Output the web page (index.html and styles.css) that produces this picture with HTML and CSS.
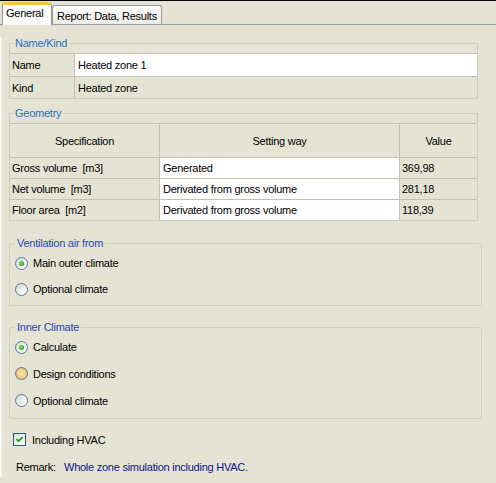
FILE: index.html
```html
<!DOCTYPE html>
<html>
<head>
<meta charset="utf-8">
<link rel="stylesheet" href="styles.css">
</head>
<body>
<div class="topline"></div>
<div class="tabstrip">
  <div class="tab active">General</div>
  <div class="tab inactive">Report: Data, Results</div>
</div>
<div class="page">
  <fieldset class="grp">
    <legend>Name/Kind</legend>
    <div class="rows">
      <div class="nk-row"><div class="lbl">Name</div><div class="val white">Heated zone 1</div></div>
      <div class="nk-row"><div class="lbl">Kind</div><div class="val">Heated zone</div></div>
    </div>
  </fieldset>

  <fieldset class="grp geo">
    <legend>Geometry</legend>
    <div class="rows">
      <div class="geo-row head"><div class="c1">Specification</div><div class="c2">Setting way</div><div class="c3">Value</div></div>
      <div class="geo-row"><div class="c1">Gross volume&nbsp; [m3]</div><div class="c2 white">Generated</div><div class="c3">369,98</div></div>
      <div class="geo-row"><div class="c1">Net volume&nbsp; [m3]</div><div class="c2 white">Derivated from gross volume</div><div class="c3">281,18</div></div>
      <div class="geo-row"><div class="c1">Floor area&nbsp; [m2]</div><div class="c2 white">Derivated from gross volume</div><div class="c3">118,39</div></div>
    </div>
  </fieldset>

  <fieldset class="xp vent">
    <legend>Ventilation air from</legend>
    <div class="opt"><span class="radio checked"></span><span>Main outer climate</span></div>
    <div class="opt"><span class="radio"></span><span>Optional climate</span></div>
  </fieldset>

  <fieldset class="xp inner">
    <legend>Inner Climate</legend>
    <div class="opt"><span class="radio checked"></span><span>Calculate</span></div>
    <div class="opt"><span class="radio hover"></span><span>Design conditions</span></div>
    <div class="opt"><span class="radio"></span><span>Optional climate</span></div>
  </fieldset>

  <div class="check-row">
    <span class="checkbox"><svg width="11" height="11" viewBox="0 0 11 11"><path d="M2.5 5.2 L4.5 7.2 L8.5 3.2" fill="none" stroke="#21a121" stroke-width="1.8"/></svg></span>
    <span>Including HVAC</span>
  </div>

  <div class="remark">
    <span class="remark-lbl">Remark:</span>
    <span class="remark-val">Whole zone simulation including HVAC.</span>
  </div>
</div>
</body>
</html>
```

FILE: styles.css
```css
* { box-sizing: border-box; }

html, body {
  margin: 0;
  padding: 0;
}

body {
  width: 496px;
  height: 483px;
  overflow: hidden;
  background: #e5e4d4;
  font-family: "Liberation Sans", Arial, sans-serif;
  font-size: 11px;
  letter-spacing: -0.25px;
  color: #000;
}

.topline {
  height: 1px;
  background: #000;
}

.tabstrip {
  height: 24px;
  display: flex;
  align-items: flex-end;
  padding-left: 2px;
  border-bottom: 1px solid #919b9c;
}

.tab {
  border: 1px solid #919b9c;
  border-bottom: none;
  white-space: nowrap;
}

.tab.active {
  width: 50px;
  height: 23px;
  margin-bottom: -1px;
  border-top: 3px solid #f9c24a;
  border-radius: 3px 3px 0 0;
  background: #fbfbf9;
  padding: 1px 0 0 3px;
  line-height: 14px;
  position: relative;
  z-index: 1;
}

.tab.inactive {
  width: 110px;
  height: 19px;
  border-radius: 3px 3px 0 0;
  background: linear-gradient(#ffffff, #ecebe5);
  padding: 3px 0 0 4px;
  line-height: 14px;
}

.page {
  border-left: 1px solid #ffffff;
  box-shadow: inset 1px 0 #f1f0e8;
  padding: 0 18px 0 8px;
}

fieldset {
  margin: 0;
  padding: 0;
  min-width: 0;
}

legend {
  line-height: 13px;
  padding: 0 2px;
}

.grp {
  border: 1px solid #cdcdbd;
  margin-top: 12px;
}

.grp legend {
  margin-left: 3px;
  color: #2c6bc0;
}

.grp.geo {
  margin-top: 8px;
}

.rows {
  margin-top: 3px;
}

.nk-row {
  display: grid;
  grid-template-columns: 65px 1fr;
  height: 23px;
  border-top: 1px solid #c2c2b2;
}

.nk-row + .nk-row {
  height: 22px;
}

.lbl, .val, .c1, .c2, .c3 {
  display: flex;
  align-items: center;
  white-space: nowrap;
}

.lbl {
  border-right: 1px solid #c2c2b2;
  padding-left: 2px;
}

.val {
  padding-left: 3px;
}

.white {
  background: #ffffff;
}

.geo-row {
  display: grid;
  grid-template-columns: 150px 240px 1fr;
  height: 21px;
  border-top: 1px solid #c2c2b2;
}

.geo-row.head {
  height: 34px;
}

.c1, .c2 {
  border-right: 1px solid #c2c2b2;
}

.c1 { padding-left: 2px; }
.c2 { padding-left: 3px; }
.c3 { padding-left: 2px; }

.head .c1, .head .c2, .head .c3 {
  justify-content: center;
  padding-left: 0;
}

.xp {
  border: 1px solid #d0d0bf;
  border-radius: 3px;
  margin-right: -4px;
  padding: 0 0 0 5px;
}

.xp legend {
  margin-left: 0;
  color: #1f47b5;
}

.vent {
  margin-top: 16px;
  padding-bottom: 3px;
}

.vent .opt {
  height: 26px;
}

.inner {
  margin-top: 15px;
  padding-bottom: 4px;
}

.inner .opt {
  height: 27px;
}

.inner .opt:first-of-type {
  height: 26px;
}

.opt {
  display: flex;
  align-items: center;
  gap: 5px;
}

.radio {
  position: relative;
  width: 13px;
  height: 13px;
  border-radius: 50%;
  border: 1px solid #567a9e;
  background: linear-gradient(135deg, #d6d6cf 0%, #eeeeea 50%, #ffffff 100%);
  flex: none;
}

.radio.checked::after {
  content: "";
  position: absolute;
  left: 3px;
  top: 3px;
  width: 5px;
  height: 5px;
  border-radius: 50%;
  background: radial-gradient(circle at 40% 40%, #8ee68e 0%, #38b538 50%, #1d8f1d 100%);
}

.radio.hover {
  background: radial-gradient(circle, #f6e6bf 0%, #f3d594 45%, #f6b849 75%, #f0a535 100%);
}

.check-row {
  margin-top: 10px;
  height: 21px;
  display: flex;
  align-items: center;
  padding-left: 4px;
  gap: 6px;
}

.checkbox {
  width: 13px;
  height: 13px;
  border: 1px solid #2a5b86;
  background: linear-gradient(135deg, #dcdcd6, #ffffff);
  display: flex;
  align-items: center;
  justify-content: center;
  flex: none;
}

.checkbox svg {
  display: block;
}

.remark {
  margin-top: 7px;
  height: 20px;
  display: flex;
  align-items: center;
  padding-left: 7px;
}

.remark-lbl {
  width: 48px;
  flex: none;
}

.remark-val {
  color: #0e1287;
}
```
